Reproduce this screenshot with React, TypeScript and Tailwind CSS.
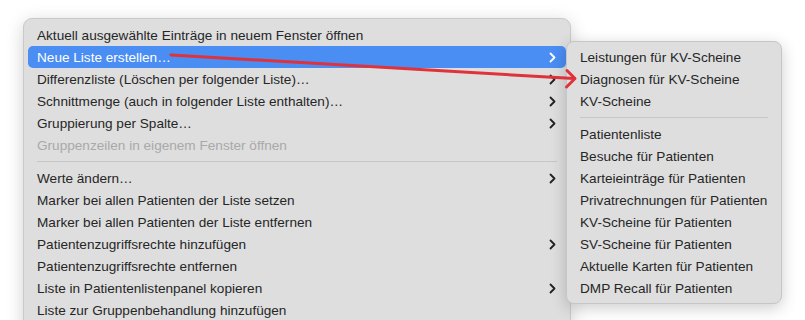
import React from 'react';

type Item = { label: string; sub?: boolean; disabled?: boolean; active?: boolean } | 'sep';

const mainItems: Item[] = [
  { label: 'Aktuell ausgewählte Einträge in neuem Fenster öffnen' },
  { label: 'Neue Liste erstellen…', sub: true, active: true },
  { label: 'Differenzliste (Löschen per folgender Liste)…', sub: true },
  { label: 'Schnittmenge (auch in folgender Liste enthalten)…', sub: true },
  { label: 'Gruppierung per Spalte…', sub: true },
  { label: 'Gruppenzeilen in eigenem Fenster öffnen', disabled: true },
  'sep',
  { label: 'Werte ändern…', sub: true },
  { label: 'Marker bei allen Patienten der Liste setzen' },
  { label: 'Marker bei allen Patienten der Liste entfernen' },
  { label: 'Patientenzugriffsrechte hinzufügen', sub: true },
  { label: 'Patientenzugriffsrechte entfernen' },
  { label: 'Liste in Patientenlistenpanel kopieren', sub: true },
  { label: 'Liste zur Gruppenbehandlung hinzufügen' },
];

const subItems: Item[] = [
  { label: 'Leistungen für KV-Scheine' },
  { label: 'Diagnosen für KV-Scheine' },
  { label: 'KV-Scheine' },
  'sep',
  { label: 'Patientenliste' },
  { label: 'Besuche für Patienten' },
  { label: 'Karteieinträge für Patienten' },
  { label: 'Privatrechnungen für Patienten' },
  { label: 'KV-Scheine für Patienten' },
  { label: 'SV-Scheine für Patienten' },
  { label: 'Aktuelle Karten für Patienten' },
  { label: 'DMP Recall für Patienten' },
];

const Chevron = ({ light }: { light?: boolean }) => (
  <svg width="7" height="11" viewBox="0 0 7 11" fill="none" className="shrink-0">
    <path
      d="M1.5 1.5 L5.5 5.5 L1.5 9.5"
      stroke={light ? '#ffffff' : '#222222'}
      strokeWidth="1.8"
      strokeLinecap="round"
      strokeLinejoin="round"
    />
  </svg>
);

const MenuRows = ({ items }: { items: Item[] }) => (
  <>
    {items.map((it, i) =>
      it === 'sep' ? (
        <div key={i} className="h-[11px] flex items-center px-[9px]">
          <div className="h-px w-full bg-[#c6c6c6]" />
        </div>
      ) : (
        <div
          key={i}
          className={`h-[22px] flex items-center justify-between pl-[9px] pr-[10px] rounded-[5px] whitespace-nowrap ${
            it.active ? 'bg-[#4a8df3] text-white' : it.disabled ? 'text-[#a9a9a9]' : 'text-[#262626]'
          }`}
        >
          <span className="pt-[2px]">{it.label}</span>
          {it.sub && <Chevron light={it.active} />}
        </div>
      )
    )}
  </>
);

export default function App() {
  return (
    <div
      className="relative w-[805px] h-[320px] overflow-hidden bg-white text-[13.6px]"
      style={{ fontFamily: '"Liberation Sans", Arial, sans-serif' }}
    >
      <div className="pt-[18px] pl-[23px]">
        <div className="w-[548px] h-[330px] bg-[#dedede] rounded-[9px] border border-[#c9c9c9] shadow-[0_4px_18px_rgba(0,0,0,0.18)] px-[4px] pt-[5px]">
          <MenuRows items={mainItems} />
        </div>
      </div>

      <div className="absolute left-[566px] top-[41px] w-[216px] h-[263px] bg-[#dedede] rounded-[8px] border border-[#c6c6c6] shadow-[0_4px_16px_rgba(0,0,0,0.2)] px-[4px] pt-[4px]">
        <MenuRows items={subItems} />
      </div>

      <svg className="absolute left-0 top-0 pointer-events-none" width="805" height="320">
        <line x1="171" y1="55" x2="574" y2="78.5" stroke="#e0323a" strokeWidth="3" strokeLinecap="round" />
        <path d="M567 70.5 L575 78.5 L566.5 87" stroke="#e0323a" strokeWidth="3" fill="none" strokeLinecap="round" strokeLinejoin="round" />
      </svg>
    </div>
  );
}
